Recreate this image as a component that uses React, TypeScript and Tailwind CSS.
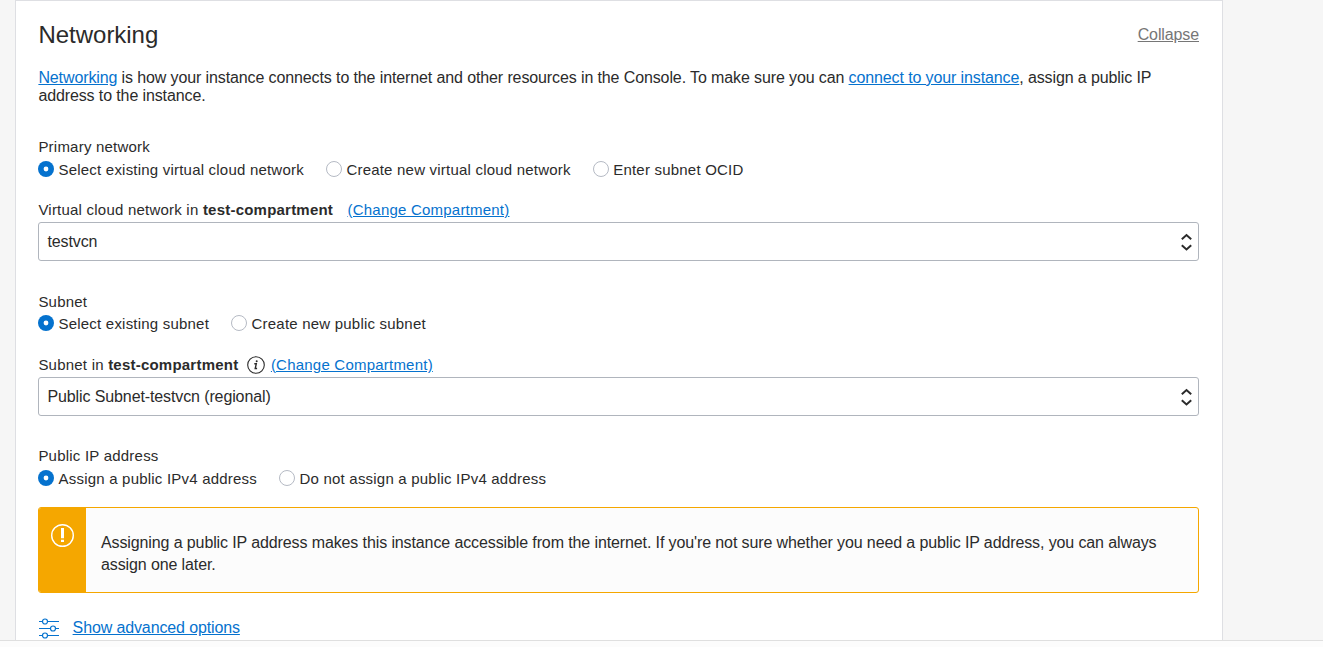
import type { ReactNode } from "react";

function Radio({ label, checked = false }: { label: string; checked?: boolean }) {
  return (
    <div className="flex h-5 items-center">
      <svg className="mr-[4.500px] mb-[3px] size-4 shrink-0" viewBox="0 0 16 16" fill="none">
        {checked ? (
          <>
            <circle cx="8" cy="8" r="8" fill="#0572ce" />
            <circle cx="8" cy="8" r="2.4" fill="#fff" />
          </>
        ) : (
          <circle cx="8" cy="8" r="7.5" fill="#fff" stroke="#b5bac4" />
        )}
      </svg>
      <span className="tracking-[0.21px]">{label}</span>
    </div>
  );
}

function Field({ value }: { value: string }) {
  return (
    <div className="flex h-[39px] items-center justify-between rounded-[3px] border border-[#b0b5bd] bg-white pr-[6px] pl-[8.5px] text-base tracking-[-0.115px]">
      <span>{value}</span>
      <svg className="h-[18px] w-3" viewBox="0 0 12 18" fill="none" stroke="#2b2b2b" strokeWidth="2">
        <path d="M1.8 6.200 6.500 2 11.200 6.200" />
        <path d="M1.800 12.200 6.500 16.400 11.200 12.200" />
      </svg>
    </div>
  );
}

function Link({ children }: { children: ReactNode }) {
  return (
    <a href="#" className="text-[#0572ce] underline">
      {children}
    </a>
  );
}

export default function App() {
  return (
    <div className="flex h-[647px] w-[1323px] flex-col overflow-hidden bg-[#f6f6f6] font-['Liberation_Sans',Arial,sans-serif] text-[#2b2b2b]">
      <main className="h-[640px] overflow-hidden pl-[15px]">
        <section className="h-[660px] w-[1208px] border border-[#dedfe3] bg-white pt-[18px] pr-[23px] pl-[22px] text-[15px] leading-5 tracking-[0.22px]">
          <header className="flex h-8 items-center justify-between">
            <h2 className="pl-[0.5px] text-2xl leading-8 tracking-[-0.03px]">Networking</h2>
            <a href="#" className="text-base tracking-[-0.115px] text-[#767676] underline">Collapse</a>
          </header>
          <p className="mt-[18px] h-9 pl-[0.4px] text-base leading-[18px] tracking-[-0.115px]">
            <Link>Networking</Link> is how your instance connects to the internet and other resources in the Console. To make sure you can{" "}
            <Link>connect to your instance</Link>, assign a public IP<br />address to the instance.
          </p>

          <div className="mt-8 pl-[0.4px]">Primary network</div>
          <div className="mt-[3px] flex gap-[22px]">
            <Radio label="Select existing virtual cloud network" checked />
            <Radio label="Create new virtual cloud network" />
            <Radio label="Enter subnet OCID" />
          </div>
          <div className="mt-5 mb-[2px] flex h-5 items-center pl-[0.4px]">
            <span className="mr-[14.400px]">Virtual cloud network in <b>test-compartment</b></span>
            <Link>(Change Compartment)</Link>
          </div>
          <Field value="testvcn" />

          <div className="mt-[31px] pl-[0.4px]">Subnet</div>
          <div className="mt-[2px] flex gap-[22px]">
            <Radio label="Select existing subnet" checked />
            <Radio label="Create new public subnet" />
          </div>
          <div className="mt-[21px] mb-[2px] flex h-5 items-center pl-[0.4px]">
            <span>Subnet in <b>test-compartment</b></span>
            <svg className="mr-[6px] ml-[8.500px] size-[18px]" viewBox="0 0 18 18" fill="none" stroke="#2b2b2b">
              <circle cx="9" cy="9" r="8.3" strokeWidth="1.1" />
              <path d="M7.3 7.7h2L8.2 12.5h1.9" strokeWidth="1.4" />
              <circle cx="9.7" cy="5.2" r="1" fill="#2b2b2b" stroke="none" />
            </svg>
            <Link>(Change Compartment)</Link>
          </div>
          <Field value="Public Subnet-testvcn (regional)" />

          <div className="mt-[30px] pl-[0.4px]">Public IP address</div>
          <div className="mt-[3px] flex gap-[22px]">
            <Radio label="Assign a public IPv4 address" checked />
            <Radio label="Do not assign a public IPv4 address" />
          </div>

          <div className="mt-[18px] flex h-[86px] overflow-hidden rounded-[3px] border border-[#f5a700] bg-[#fcfcfc]">
            <div className="flex w-[47px] shrink-0 justify-center bg-[#f5a700] pt-4">
              <svg className="size-6" viewBox="0 0 24 24" fill="none">
                <circle cx="11.5" cy="11.5" r="10.8" stroke="#fff" strokeWidth="1.4" />
                <path d="M10 4h3v10.300h-3zM10 15.700h3v2.300h-3z" fill="#fff" />
              </svg>
            </div>
            <p className="pt-[24px] pl-[15px] text-base leading-[22px] tracking-[-0.112px]">
              Assigning a public IP address makes this instance accessible from the internet. If you're not sure whether you need a public IP address, you can always<br />assign one later.
            </p>
          </div>

          <div className="mt-6 flex h-[22px] items-center text-base tracking-[-0.125px]">
            <svg className="mr-[12.600px] h-[21px] w-[22px]" viewBox="0 0 22 21" fill="none" stroke="#0572ce" strokeWidth="1.2">
              <path d="M1 3.500h3.500M9.500 3.500h11.500M1 10.500h11.500M17.500 10.500h3.500M1 17.500h3.500M9.500 17.500h11.500" />
              <circle cx="7" cy="3.500" r="2.500" />
              <circle cx="15" cy="10.500" r="2.500" />
              <circle cx="7" cy="17.500" r="2.500" />
            </svg>
            <Link>Show advanced options</Link>
          </div>
        </section>
      </main>
      <footer className="h-[7px] border-t border-[#dfdfdf] bg-[#fcfcfc]" />
    </div>
  );
}
